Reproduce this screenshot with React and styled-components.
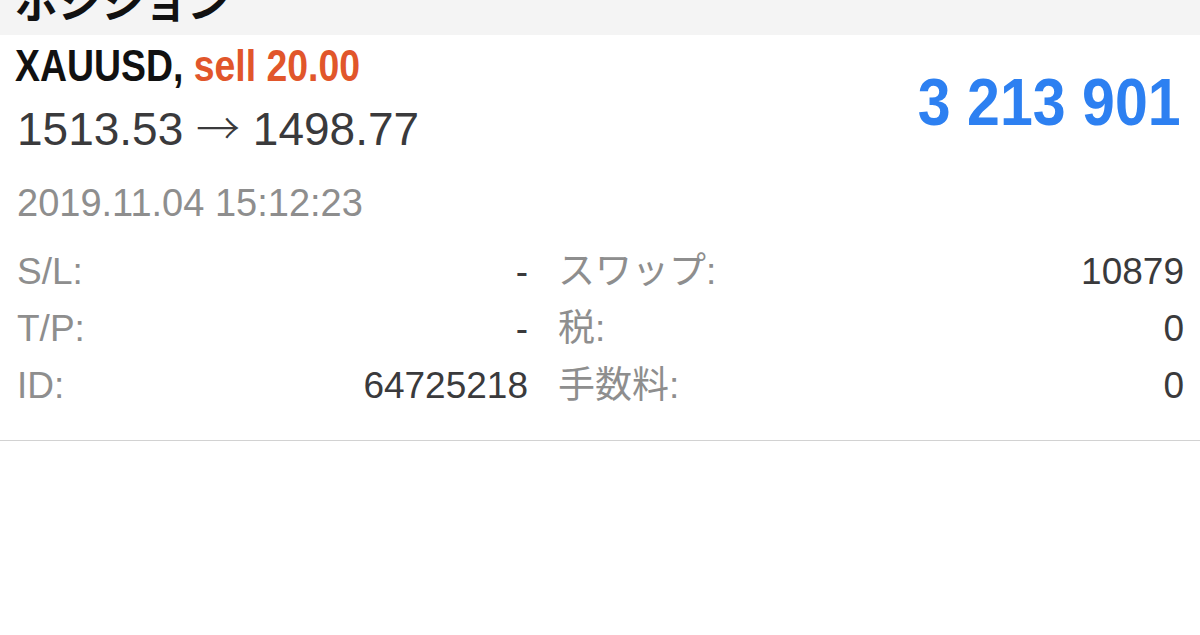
import React from "react";
import styled, { createGlobalStyle } from "styled-components";

const GlobalStyle = createGlobalStyle`
  body {
    margin: 0;
    background: #ffffff;
    font-family: "Liberation Sans", "Noto Sans CJK JP", sans-serif;
  }
`;

const Page = styled.div`
  width: 1200px;
  height: 635px;
  overflow: hidden;
  background: #fff;
`;

const Header = styled.div`
  height: 35px;
  background-color: #f4f4f4;
  display: flex;
  align-items: flex-end;
  overflow: hidden;
  padding: 0 15px 14px;
  box-sizing: border-box;
`;

const HeaderTitle = styled.h1`
  margin: 0;
  font-family: "Noto Sans CJK JP", sans-serif;
  font-weight: 700;
  font-size: 43px;
  line-height: 1;
  color: #111;
  white-space: nowrap;
`;

const Position = styled.div`
  padding: 9px 16px 26px 17px;
  border-bottom: 1px solid #d2d2d2;
`;

const TopRow = styled.div`
  display: flex;
  justify-content: space-between;
  align-items: center;
`;

const TradeInfo = styled.div`
  display: flex;
  flex-direction: column;
  align-items: flex-start;
  gap: 12px;
`;

/* the app's bold face is condensed; squeeze Arial-width bold to match */
const Symbol = styled.div`
  display: inline-block;
  font-weight: 700;
  font-size: 44px;
  line-height: 44px;
  color: #111;
  white-space: nowrap;
  margin-left: -2px;
  transform: scaleX(0.85);
  transform-origin: left center;
`;

const Side = styled.span`
  color: #e1562b;
`;

const Prices = styled.div`
  font-size: 46px;
  line-height: 52px;
  color: #3a3a3c;
`;

const Arrow = styled.span`
  font-family: "Noto Sans CJK JP", sans-serif;
  font-weight: 300;
  font-size: 44px;
`;

const Profit = styled.div`
  font-weight: 700;
  font-size: 66px;
  line-height: 1;
  color: #2d80f1;
  white-space: nowrap;
  margin-top: 4px;
  margin-right: 3px;
  transform: scaleX(0.895);
  transform-origin: right center;
`;

const Time = styled.div`
  margin-top: 26px;
  font-size: 38px;
  line-height: 44px;
  color: #8e8e8e;
`;

const Details = styled.div`
  margin-top: 18px;
  display: grid;
  grid-template-columns: 511px 1fr;
  column-gap: 30px;
`;

const Column = styled.div`
  display: flex;
  flex-direction: column;
`;

const Row = styled.div`
  display: flex;
  justify-content: space-between;
  height: 57px;
  line-height: 57px;
  font-size: 37px;
`;

const Label = styled.span`
  color: #8e8e8e;
`;

const Value = styled.span`
  color: #3a3a3c;
`;

const left = [
  ["S/L:", "-"],
  ["T/P:", "-"],
  ["ID:", "64725218"],
];

const right = [
  ["スワップ:", "10879"],
  ["税:", "0"],
  ["手数料:", "0"],
];

export default function App() {
  return (
    <Page>
      <GlobalStyle />
      <Header>
        <HeaderTitle>ポジション</HeaderTitle>
      </Header>
      <Position>
        <TopRow>
          <TradeInfo>
            <Symbol>
              XAUUSD, <Side>sell 20.00</Side>
            </Symbol>
            <Prices>
              1513.53 <Arrow>→</Arrow> 1498.77
            </Prices>
          </TradeInfo>
          <Profit>3 213 901</Profit>
        </TopRow>
        <Time>2019.11.04 15:12:23</Time>
        <Details>
          {[left, right].map((col, i) => (
            <Column key={i}>
              {col.map(([label, value]) => (
                <Row key={label}>
                  <Label>{label}</Label>
                  <Value>{value}</Value>
                </Row>
              ))}
            </Column>
          ))}
        </Details>
      </Position>
    </Page>
  );
}
